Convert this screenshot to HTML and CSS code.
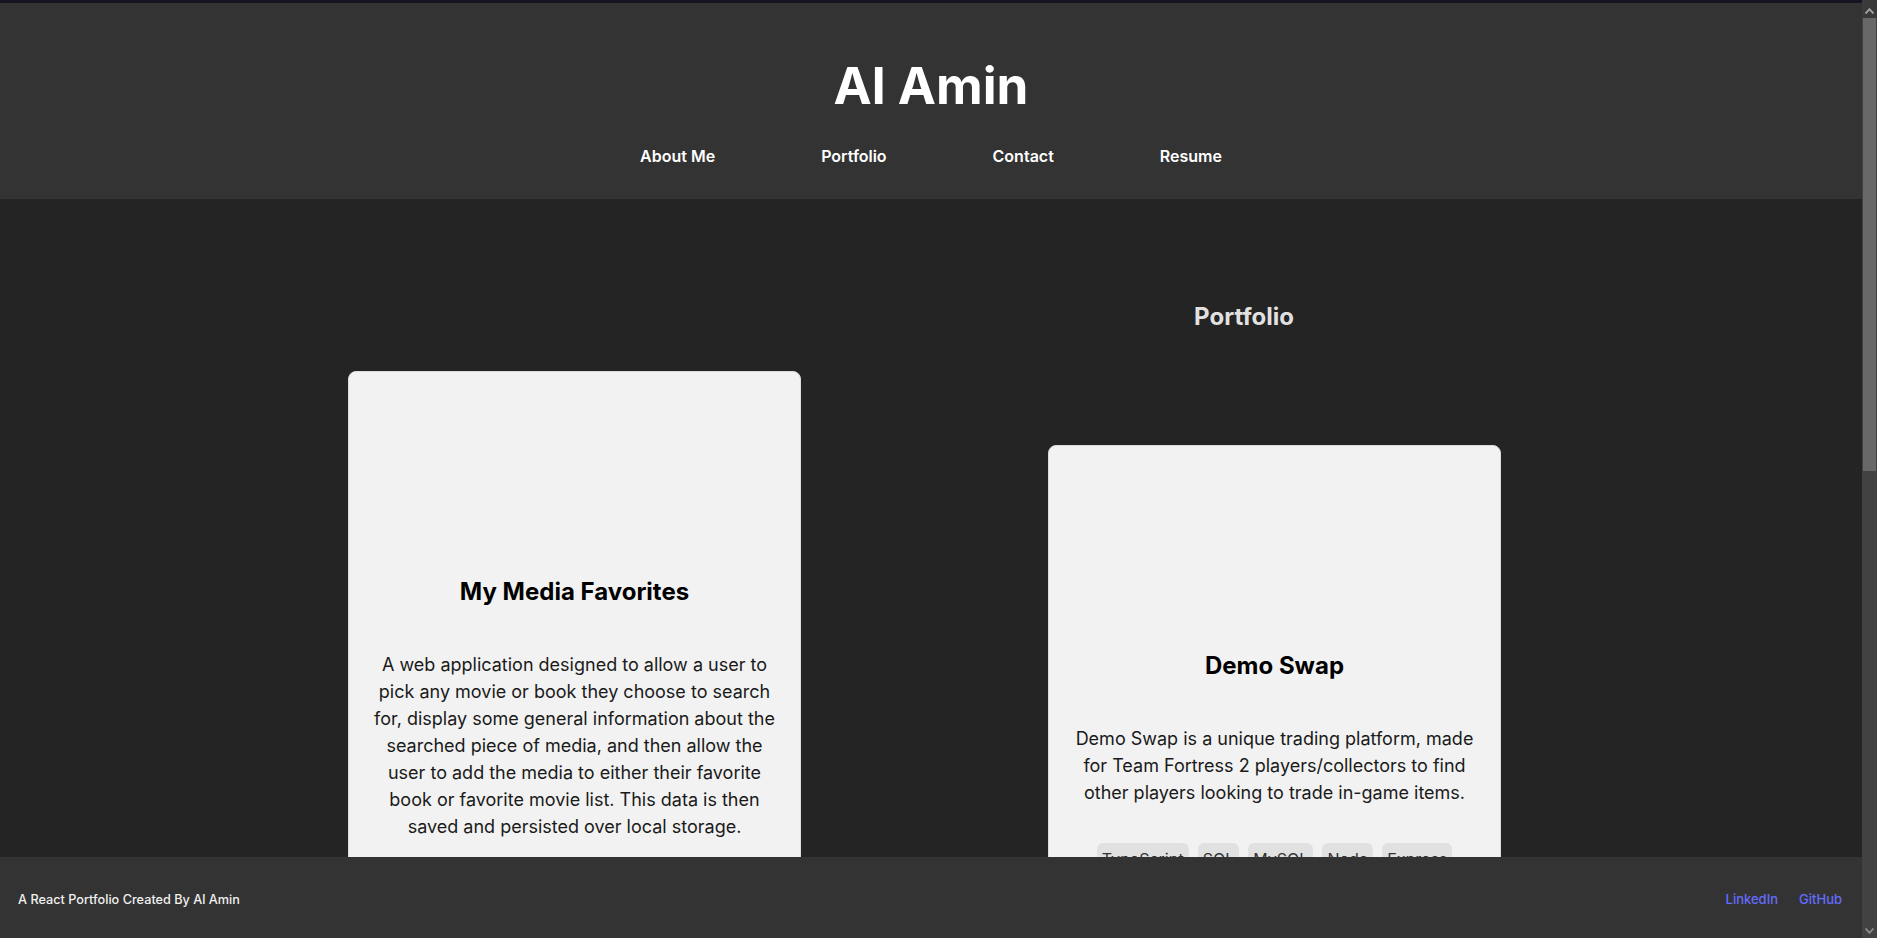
FILE: index.html
```html
<!DOCTYPE html>
<html lang="en">
<head>
<meta charset="utf-8">
<title>Al Amin - Portfolio</title>
<link rel="stylesheet" href="styles.css">
</head>
<body>
<header class="site-header">
  <h1 class="site-title">Al Amin</h1>
  <nav class="site-nav">
    <a class="nav-link" href="#about">About Me</a>
    <a class="nav-link" href="#portfolio">Portfolio</a>
    <a class="nav-link" href="#contact">Contact</a>
    <a class="nav-link" href="#resume">Resume</a>
  </nav>
</header>

<main class="page">
  <div class="section-head">
    <h2 class="section-title">Portfolio</h2>
  </div>
  <div class="cards">
    <article class="card">
      <div class="card-media"></div>
      <h3 class="card-title">My Media Favorites</h3>
      <p class="card-desc">A web application designed to allow a user to pick any movie or book they choose to search for, display some general information about the searched piece of media, and then allow the user to add the media to either their favorite book or favorite movie list. This data is then saved and persisted over local storage.</p>
      <div class="tags">
        <span class="tag">JavaScript</span>
        <span class="tag">HTML</span>
        <span class="tag">CSS</span>
        <span class="tag">Bulma</span>
        <span class="tag">OMDb API</span>
        <span class="tag">Google Books API</span>
      </div>
      <div class="card-links">
        <a class="card-link" href="#">Repository</a>
        <a class="card-link" href="#">Live Site</a>
      </div>
    </article>
    <article class="card">
      <div class="card-media"></div>
      <h3 class="card-title">Demo Swap</h3>
      <p class="card-desc">Demo Swap is a unique trading platform, made for Team Fortress 2 players/collectors to find other players looking to trade in-game items.</p>
      <div class="tags">
        <span class="tag">TypeScript</span>
        <span class="tag">SQL</span>
        <span class="tag">MySQL</span>
        <span class="tag">Node</span>
        <span class="tag">Express</span>
      </div>
      <div class="card-links">
        <a class="card-link" href="#">Repository</a>
        <a class="card-link" href="#">Live Site</a>
      </div>
    </article>
  </div>
</main>

<footer class="site-footer">
  <p class="footer-text">A React Portfolio Created By Al Amin</p>
  <div class="footer-links">
    <a class="footer-link" href="#">LinkedIn</a>
    <a class="footer-link" href="#">GitHub</a>
  </div>
</footer>

<div class="scrollbar" aria-hidden="true">
  <div class="sb-arrow sb-up">
    <svg width="9" height="6" viewBox="0 0 9 6"><path d="M0.5 5.5 L4.5 1.2 L8.5 5.5" fill="none" stroke="#a8a8a8" stroke-width="1.8"/></svg>
  </div>
  <div class="sb-thumb"></div>
  <div class="sb-track"></div>
  <div class="sb-arrow sb-down">
    <svg width="9" height="6" viewBox="0 0 9 6"><path d="M0.5 0.5 L4.5 4.8 L8.5 0.5" fill="none" stroke="#8a8a8a" stroke-width="1.8"/></svg>
  </div>
</div>
</body>
</html>
```

FILE: styles.css
```css
html {
  color-scheme: dark;
  scrollbar-width: none;
}

body {
  margin: 0 15px 0 0;
  border-top: 3px solid #16151f;
  background: #242424;
  color: rgba(255, 255, 255, 0.87);
  font-family: Inter, "Noto Sans", sans-serif;
  line-height: 1.5;
}

.site-header {
  background: #333333;
  height: 196px;
  box-sizing: border-box;
  padding-top: 54px;
  display: flex;
  flex-direction: column;
  align-items: center;
}

.site-title {
  margin: 0;
  font-size: 51.2px;
  line-height: 1.1;
  font-weight: 700;
  color: #ffffff;
}

.site-nav {
  margin-top: 31px;
  display: flex;
  gap: 106px;
}

.nav-link {
  color: #ffffff;
  text-decoration: none;
  font-size: 16px;
  font-weight: 600;
  line-height: 24px;
}

.page {
  padding-bottom: 880px;
}

.section-head {
  padding-top: 100px;
  padding-left: 626px;
  text-align: center;
}

.section-title {
  margin: 0;
  font-size: 24px;
  line-height: 36px;
  font-weight: 700;
  color: #e1e1e1;
}

.cards {
  margin-top: 36px;
  display: flex;
  justify-content: center;
  align-items: center;
  gap: 247px;
  padding-right: 13px;
}

.card {
  width: 453px;
  box-sizing: border-box;
  background: #f2f2f2;
  border: 1px solid #dcdcdc;
  border-radius: 8px;
  padding: 0 24px 24px;
  text-align: center;
  color: #1a1a1a;
}

.card-media {
  height: 182px;
}

.card-title {
  margin: 20px 0 0;
  font-size: 24px;
  line-height: 36px;
  font-weight: 700;
  color: #000000;
}

.card-desc {
  margin: 41px 0 0;
  font-size: 18px;
  line-height: 27px;
}

.tags {
  margin-top: 37px;
  display: flex;
  flex-wrap: wrap;
  justify-content: center;
  gap: 8px 9px;
}

.tag {
  background: #e1e1e1;
  border-radius: 6px;
  padding: 4px 5px;
  font-size: 16px;
  line-height: 24px;
  color: #333333;
}

.card-links {
  margin-top: 24px;
  display: flex;
  justify-content: center;
  gap: 16px;
}

.card-link {
  color: #646cff;
  text-decoration: none;
  font-weight: 500;
}

.site-footer {
  position: fixed;
  left: 0;
  right: 15px;
  bottom: 0;
  height: 81px;
  background: #333333;
  display: flex;
  justify-content: space-between;
  align-items: center;
  padding: 4px 20px 0 18px;
  box-sizing: border-box;
}

.footer-text {
  margin: 0;
  font-size: 12.7px;
  font-weight: 500;
  color: #f0f0f0;
}

.footer-links {
  display: flex;
  gap: 21px;
}

.footer-link {
  color: #646cff;
  text-decoration: none;
  font-size: 13px;
  font-weight: 500;
}

.scrollbar {
  position: fixed;
  top: 0;
  right: 0;
  bottom: 0;
  width: 15px;
  background: #424242;
  display: flex;
  flex-direction: column;
}

.sb-arrow {
  height: 15px;
  display: flex;
  align-items: center;
  justify-content: center;
  flex: none;
}

.sb-up {
  height: 18px;
  padding-top: 3px;
  box-sizing: border-box;
  background: #3a3a3a;
}

.sb-thumb {
  height: 453px;
  margin: 0 1px;
  background: #686868;
  flex: none;
}

.sb-track {
  flex: 1;
}
```
